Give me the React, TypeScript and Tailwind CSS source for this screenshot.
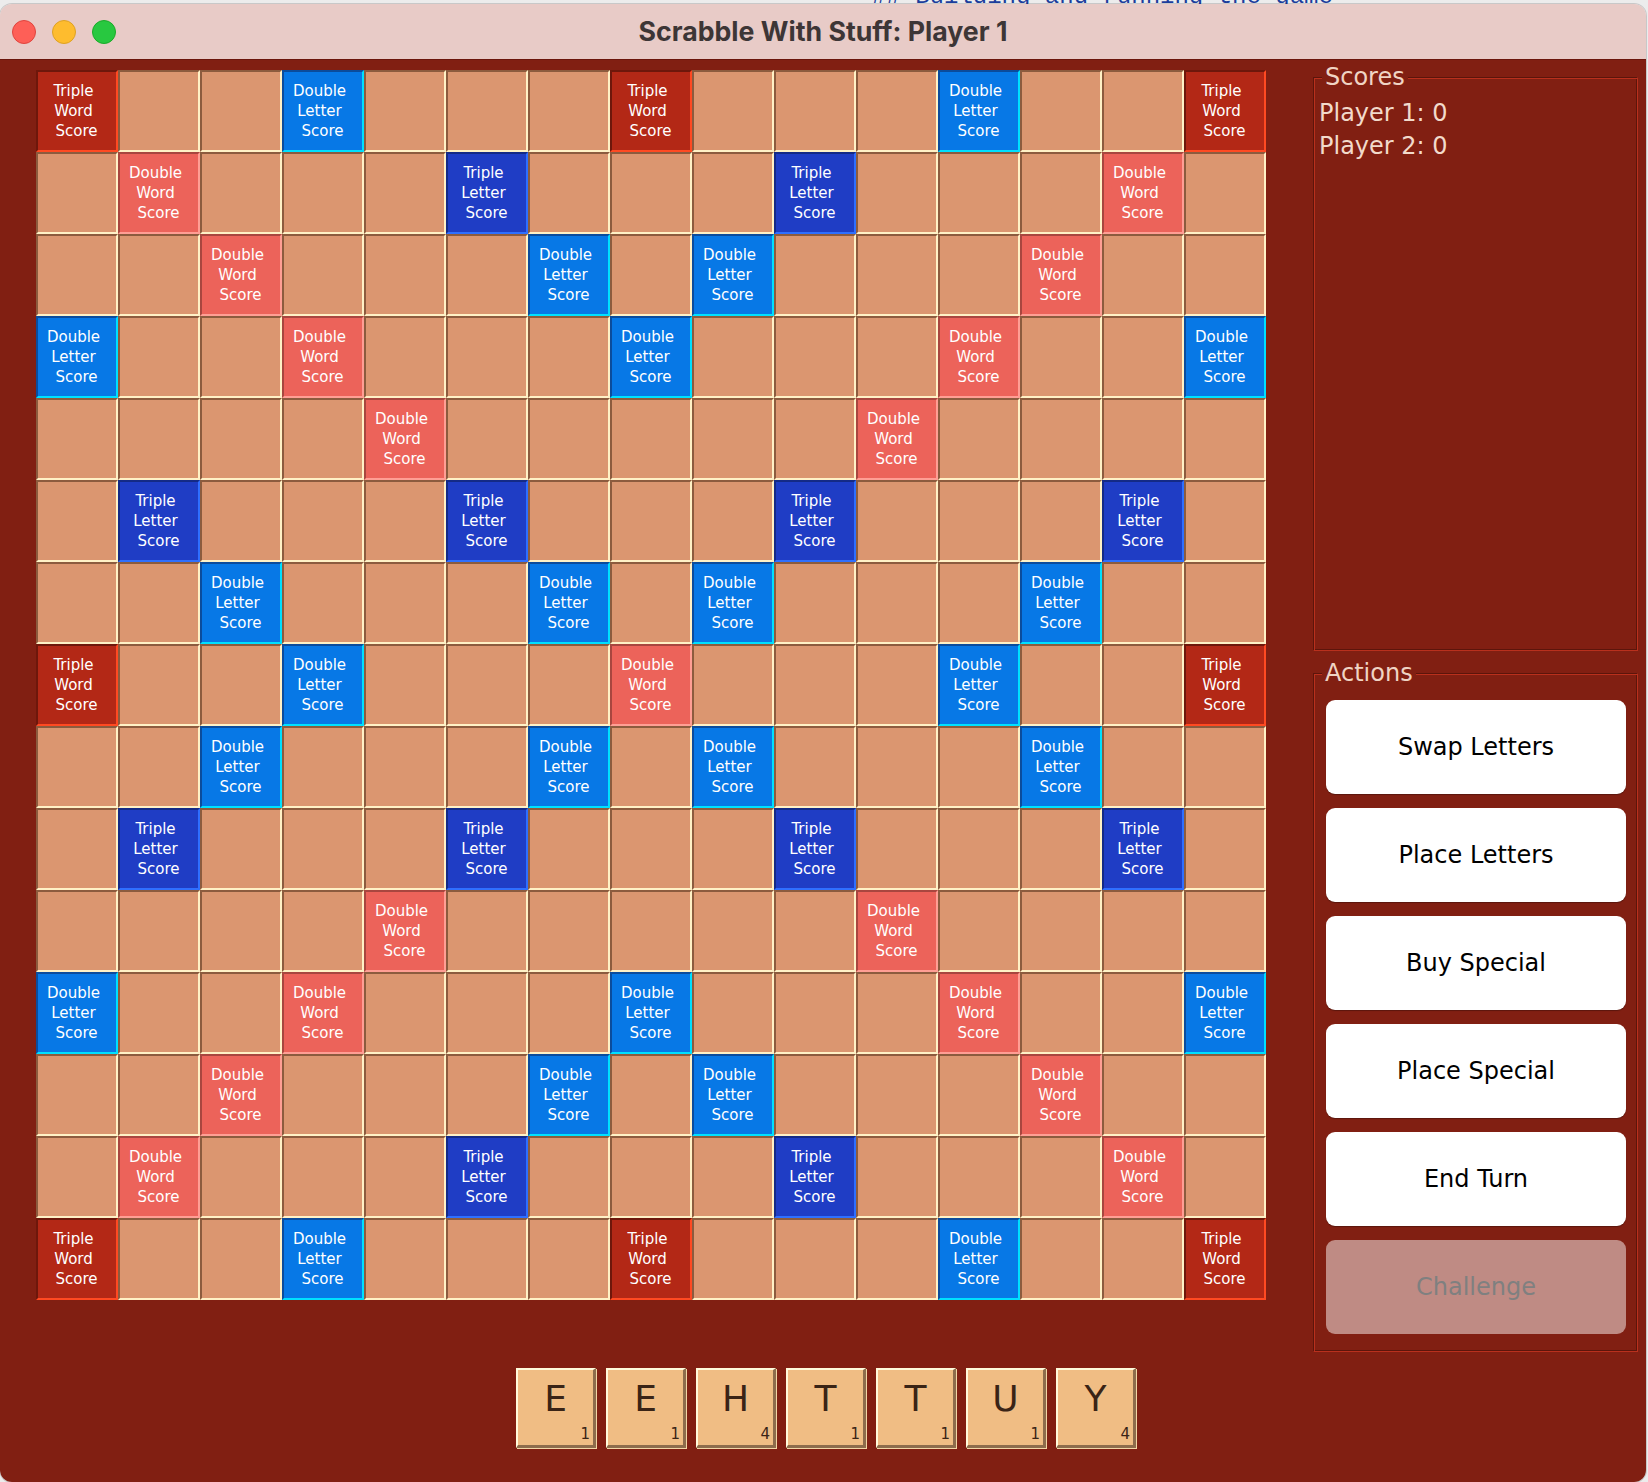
import React from "react";

type Kind = "." | "T" | "D" | "d" | "t";

// T = triple word, D = double word, d = double letter, t = triple letter
const BOARD = [
  "T..d...T...d..T",
  ".D...t...t...D.",
  "..D...d.d...D..",
  "d..D...d...D..d",
  "....D.....D....",
  ".t...t...t...t.",
  "..d...d.d...d..",
  "T..d...D...d..T",
  "..d...d.d...d..",
  ".t...t...t...t.",
  "....D.....D....",
  "d..D...d...D..d",
  "..D...d.d...D..",
  ".D...t...t...D.",
  "T..d...T...d..T",
];

const CELL: Record<Kind, string> = {
  ".": "bg-[#db9670] border-t-[#8c5b3e] border-l-[#8c5b3e] border-b-[#fff1c6] border-r-[#fff1c6]",
  T: "bg-[#b32816] border-t-[#6e170b] border-l-[#6e170b] border-b-[#ff4a22] border-r-[#ff4a22]",
  D: "bg-[#ec635a] border-t-[#a8463f] border-l-[#a8463f] border-b-[#ff9e94] border-r-[#ff9e94]",
  d: "bg-[#0778e6] border-t-[#0b4c9c] border-l-[#0b4c9c] border-b-[#00e0ff] border-r-[#00e0ff]",
  t: "bg-[#1f3dc5] border-t-[#142a86] border-l-[#142a86] border-b-[#2f6fff] border-r-[#2f6fff]",
};

const LABEL: Record<Kind, string[]> = {
  ".": [],
  T: ["Triple", "Word", "Score"],
  D: ["Double", "Word", "Score"],
  d: ["Double", "Letter", "Score"],
  t: ["Triple", "Letter", "Score"],
};

const RACK = [
  { letter: "E", value: 1 },
  { letter: "E", value: 1 },
  { letter: "H", value: 4 },
  { letter: "T", value: 1 },
  { letter: "T", value: 1 },
  { letter: "U", value: 1 },
  { letter: "Y", value: 4 },
];

const ACTIONS = ["Swap Letters", "Place Letters", "Buy Special", "Place Special", "End Turn"];

function Cell({ kind }: { kind: Kind }) {
  return (
    <div
      className={`flex h-[82px] w-[82px] flex-col items-center justify-center border-2 text-[15px] leading-[20px] text-white ${CELL[kind]}`}
    >
      {LABEL[kind].map((line, i) => (
        <span key={i} className={i < 2 ? "pr-[7px]" : "pr-[1px]"}>
          {line}
        </span>
      ))}
    </div>
  );
}

function Tile({ letter, value }: { letter: string; value: number }) {
  return (
    <div className="flex h-[80px] w-[80px] flex-col border-t-2 border-l-2 border-b-[3px] border-r-[3px] border-t-[#fffbdc] border-l-[#fffbdc] border-b-[#8d6c4c] border-r-[#8d6c4c] bg-[#f0bd84] text-[#3a2416] shadow-[1px_1px_0_#f3d6a6]">
      <span className="mt-[11px] text-center text-[36px] leading-[36px]">{letter}</span>
      <span className="mt-auto self-end pr-[3px] pb-[3px] text-[15px] leading-[15px]">{value}</span>
    </div>
  );
}

export default function App() {
  return (
    <div className="relative h-[1482px] w-[1648px] overflow-hidden bg-[#ececec]">
      {/* editor text peeking out behind the window */}
      <div className="absolute left-[872px] top-[-15px] whitespace-pre font-['Liberation_Mono',monospace] text-[24px] leading-[24px] text-[#1b3d9c]">
        ## Building and running the game
      </div>

      <div className="relative z-10 mt-[4px] flex h-[1478px] w-[1646px] flex-col overflow-hidden rounded-[12px] font-['DejaVu_Sans',sans-serif] shadow-[0_0_0_1px_rgba(0,0,0,0.15)]">
        {/* title bar */}
        <div className="grid h-[56px] grid-cols-[1fr_auto_1fr] items-center border-b border-[#6b150b] bg-[#e8cbc7]">
          <div className="flex gap-[16px] pl-[12px]">
            <span className="h-[24px] w-[24px] rounded-full border border-[#e0443e] bg-[#fe5f57]" />
            <span className="h-[24px] w-[24px] rounded-full border border-[#dea123] bg-[#febc2e]" />
            <span className="h-[24px] w-[24px] rounded-full border border-[#1aab29] bg-[#28c840]" />
          </div>
          <div className="font-['Inter',sans-serif] text-[26.7px] font-bold text-[#3d3636]">
            Scrabble With Stuff: Player 1
          </div>
          <div />
        </div>

        {/* body */}
        <div className="flex flex-1 flex-col bg-[#811f12]">
          <div className="flex items-start">
            <div className="ml-[36px] mt-[10px] grid grid-cols-[repeat(15,82px)]">
              {BOARD.map((row, r) =>
                row.split("").map((k, c) => <Cell key={`${r}-${c}`} kind={k as Kind} />)
              )}
            </div>

            <div className="ml-[47px] mt-[5px] flex w-[325px] flex-col">
              <fieldset className="h-[586px] border border-t-[#5c150b] border-l-[#5c150b] border-b-[#b9301d] border-r-[#b9301d] shadow-[inset_1px_1px_0_#b9301d,inset_-1px_-1px_0_#5c150b]">
                <legend className="ml-[8px] bg-[#811f12] px-[3px] text-[24px] leading-[24px] text-[#f0d4c4]">
                  Scores
                </legend>
                <div className="pl-[5px] pt-[8px] text-[24px] leading-[33px] text-[#f2dacb]">
                  <div>Player 1: 0</div>
                  <div>Player 2: 0</div>
                </div>
              </fieldset>

              <fieldset className="mt-[10px] border border-t-[#5c150b] border-l-[#5c150b] border-b-[#b9301d] border-r-[#b9301d] shadow-[inset_1px_1px_0_#b9301d,inset_-1px_-1px_0_#5c150b]">
                <legend className="ml-[8px] bg-[#811f12] px-[3px] text-[24px] leading-[24px] text-[#f0d4c4]">
                  Actions
                </legend>
                <div className="flex flex-col gap-[14px] pl-[12px] pr-[11px] pt-[15px] pb-[17px]">
                  {ACTIONS.map((a) => (
                    <button
                      key={a}
                      className="h-[94px] w-[300px] rounded-[9px] bg-white text-[24px] text-black shadow-[0_1px_1px_rgba(0,0,0,0.3)]"
                    >
                      {a}
                    </button>
                  ))}
                  <button
                    disabled
                    className="h-[94px] w-[300px] rounded-[9px] bg-[#bf8b84] text-[24px] text-[#7f8080]"
                  >
                    Challenge
                  </button>
                </div>
              </fieldset>
            </div>
          </div>

          {/* rack */}
          <div className="mt-[16px] flex justify-center gap-[10px] pl-[6px]">
            {RACK.map((t, i) => (
              <Tile key={i} letter={t.letter} value={t.value} />
            ))}
          </div>
        </div>
      </div>
    </div>
  );
}
